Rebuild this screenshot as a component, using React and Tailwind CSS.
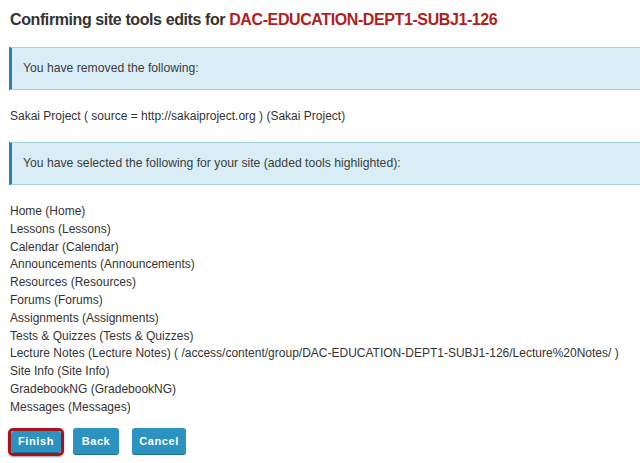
const tools = [
  "Home (Home)",
  "Lessons (Lessons)",
  "Calendar (Calendar)",
  "Announcements (Announcements)",
  "Resources (Resources)",
  "Forums (Forums)",
  "Assignments (Assignments)",
  "Tests & Quizzes (Tests & Quizzes)",
  "Lecture Notes (Lecture Notes) ( /access/content/group/DAC-EDUCATION-DEPT1-SUBJ1-126/Lecture%20Notes/ )",
  "Site Info (Site Info)",
  "GradebookNG (GradebookNG)",
  "Messages (Messages)",
];

function InfoBox({ children }) {
  return (
    <div className="h-[43px] flex items-center bg-[#d9edf7] border-y border-[#a6d3ea] border-l-[3px] border-l-[#2b7fae] pl-[11px] text-[12.2px] text-[#3c3c3c]">
      {children}
    </div>
  );
}

function Btn({ label, cls }) {
  return (
    <button
      className={`${cls} rounded-[3px] bg-[#2c93c1] text-white text-[11px] font-bold tracking-[0.6px] border-b border-[#1f6f94] flex items-center justify-center`}
    >
      {label}
    </button>
  );
}

export default function App() {
  return (
    <div
      className="w-[640px] h-[463px] overflow-hidden bg-white pl-[9px] text-[#333]"
      style={{ fontFamily: '"Liberation Sans", Arial, sans-serif' }}
    >
      <h1 className="pt-[9px] pl-[1px] text-[16px] leading-[22px] font-bold tracking-[-0.4px] text-[#333] whitespace-nowrap">
        Confirming site tools edits for{" "}
        <span className="text-[#b21d1d]">DAC-EDUCATION-DEPT1-SUBJ1-126</span>
      </h1>

      <div className="mt-[16px]">
        <InfoBox>You have removed the following:</InfoBox>
      </div>

      <p className="mt-[18px] pl-[1px] text-[12px] leading-[16px]">
        Sakai Project ( source = http://sakaiproject.org ) (Sakai Project)
      </p>

      <div className="mt-[18px]">
        <InfoBox>
          You have selected the following for your site (added tools highlighted):
        </InfoBox>
      </div>

      <ul className="mt-[18px] pl-[1px] text-[12px] leading-[17.8px] whitespace-nowrap">
        {tools.map((t) => (
          <li key={t}>{t}</li>
        ))}
      </ul>

      <div className="mt-[11px] flex items-center">
        <div className="-ml-[1px] rounded-[5px] border-[3px] border-[#a3141d] shadow-[0_1px_2px_rgba(0,0,0,0.4)]">
          <Btn label="Finish" cls="w-[50px] h-[22px]" />
        </div>
        <div className="ml-[9px]">
          <Btn label="Back" cls="w-[46px] h-[27px]" />
        </div>
        <div className="ml-[13px]">
          <Btn label="Cancel" cls="w-[54px] h-[27px]" />
        </div>
      </div>
    </div>
  );
}
